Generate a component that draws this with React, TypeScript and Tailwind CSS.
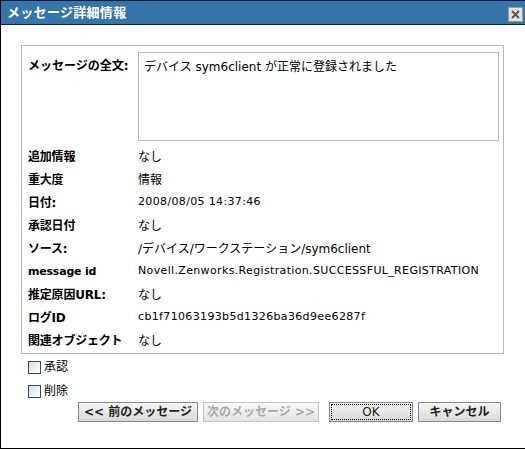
import React from "react";

const FONT = { fontFamily: '"DejaVu Sans", "Noto Sans CJK JP", sans-serif' };

const rows: [string, string][] = [
  ["追加情報", "なし"],
  ["重大度", "情報"],
  ["日付:", "2008/08/05 14:37:46"],
  ["承認日付", "なし"],
  ["ソース:", "/デバイス/ワークステーション/sym6client"],
  ["message id", "Novell.Zenworks.Registration.SUCCESSFUL_REGISTRATION"],
  ["推定原因URL:", "なし"],
  ["ログID", "cb1f71063193b5d1326ba36d9ee6287f"],
  ["関連オブジェクト", "なし"],
];

const hasCjk = (s: string) => /[\u3000-\u9fff]/.test(s);

function Checkbox({ label }: { label: string }) {
  return (
    <div className="flex items-center h-[24px]">
      <div className="w-[13px] h-[13px] border border-[#1c5180] bg-gradient-to-br from-[#dcdcdc] to-[#ffffff]" />
      <span className="ml-[3px] text-[12px] text-black">{label}</span>
    </div>
  );
}

export default function App() {
  return (
    <div className="w-[525px] h-[449px] bg-white flex flex-col overflow-hidden" style={FONT}>
      <div className="flex-1 flex flex-col border-l border-b border-black">
        <div className="h-[1px] bg-[#0b1c3c] shrink-0" />
        <div className="h-[23px] bg-[#3575aa] flex items-center justify-between pl-[6px] pr-[2px] shrink-0">
          <span className="text-white font-bold text-[13px] leading-none tracking-[0.3px]">メッセージ詳細情報</span>
          <div className="w-[15px] h-[15px] mt-[4px] border border-[#9a9a9a] bg-[#e2e2e2] flex items-center justify-center">
            <svg width="11" height="11" viewBox="0 0 11 11">
              <path d="M2 2 L9 9 M9 2 L2 9" stroke="#555" strokeWidth="1.8" />
            </svg>
          </div>
        </div>
        <div className="h-[1px] bg-[#0f2340] shrink-0" />
        <div className="flex-1 flex flex-col pl-[20px] pt-[20px]">
          <div className="w-[483px] h-[309px] border border-[#b8b8b8] flex flex-col pl-[6px] pr-[3px] pt-[6px]">
            <div className="flex">
              <div className="w-[110px] pt-[6px] text-[12px] font-bold text-black leading-[16px]">メッセージの全文:</div>
              <div className="w-[361px] h-[89px] border border-[#b8b8b8] px-[5px] pt-[6px] text-[12px] leading-[16px] text-black">
                デバイス sym6client が正常に登録されました
              </div>
            </div>
            <div className="flex flex-col pt-[4px]">
              {rows.map(([k, v]) => (
                <div key={k} className="flex items-center h-[23px]">
                  <div className="w-[110px] text-[12px] font-bold text-black whitespace-nowrap tracking-[-0.2px]">
                    {k === "message id" ? <span className="text-[11px]">{k}</span> : k}
                  </div>
                  {hasCjk(v) ? (
                    <div className="text-[12px] text-black whitespace-nowrap">{v}</div>
                  ) : (
                    <div className="text-[11px] tracking-[0.35px] text-black whitespace-nowrap">{v}</div>
                  )}
                </div>
              ))}
            </div>
          </div>
          <div className="flex flex-col pl-[7px] pt-[1px]">
            <Checkbox label="承認" />
            <Checkbox label="削除" />
          </div>
          <div className="flex justify-end pr-[24px] -mt-[1px] gap-[5px]">
            <button className="h-[20px] w-[120px] border border-[#8a8a8a] bg-gradient-to-b from-[#f6f6f6] to-[#d8d8d8] text-[12px] font-bold text-[#222] leading-none">
              &lt;&lt; 前のメッセージ
            </button>
            <button className="h-[20px] w-[116px] border border-[#c4c4c4] bg-gradient-to-b from-[#f8f8f8] to-[#e4e4e4] text-[12px] font-bold text-[#a8a8a8] leading-none">
              次のメッセージ &gt;&gt;
            </button>
            <button className="ml-[5px] h-[20px] w-[84px] border border-[#8a8a8a] bg-gradient-to-b from-[#f6f6f6] to-[#d8d8d8] p-[1px]">
              <div className="w-full h-full border border-dotted border-black flex items-center justify-center text-[12px] text-[#222] leading-none">
                OK
              </div>
            </button>
            <button className="h-[20px] w-[83px] border border-[#8a8a8a] bg-gradient-to-b from-[#f6f6f6] to-[#d8d8d8] text-[12px] font-bold text-[#222] leading-none">
              キャンセル
            </button>
          </div>
        </div>
      </div>
    </div>
  );
}
